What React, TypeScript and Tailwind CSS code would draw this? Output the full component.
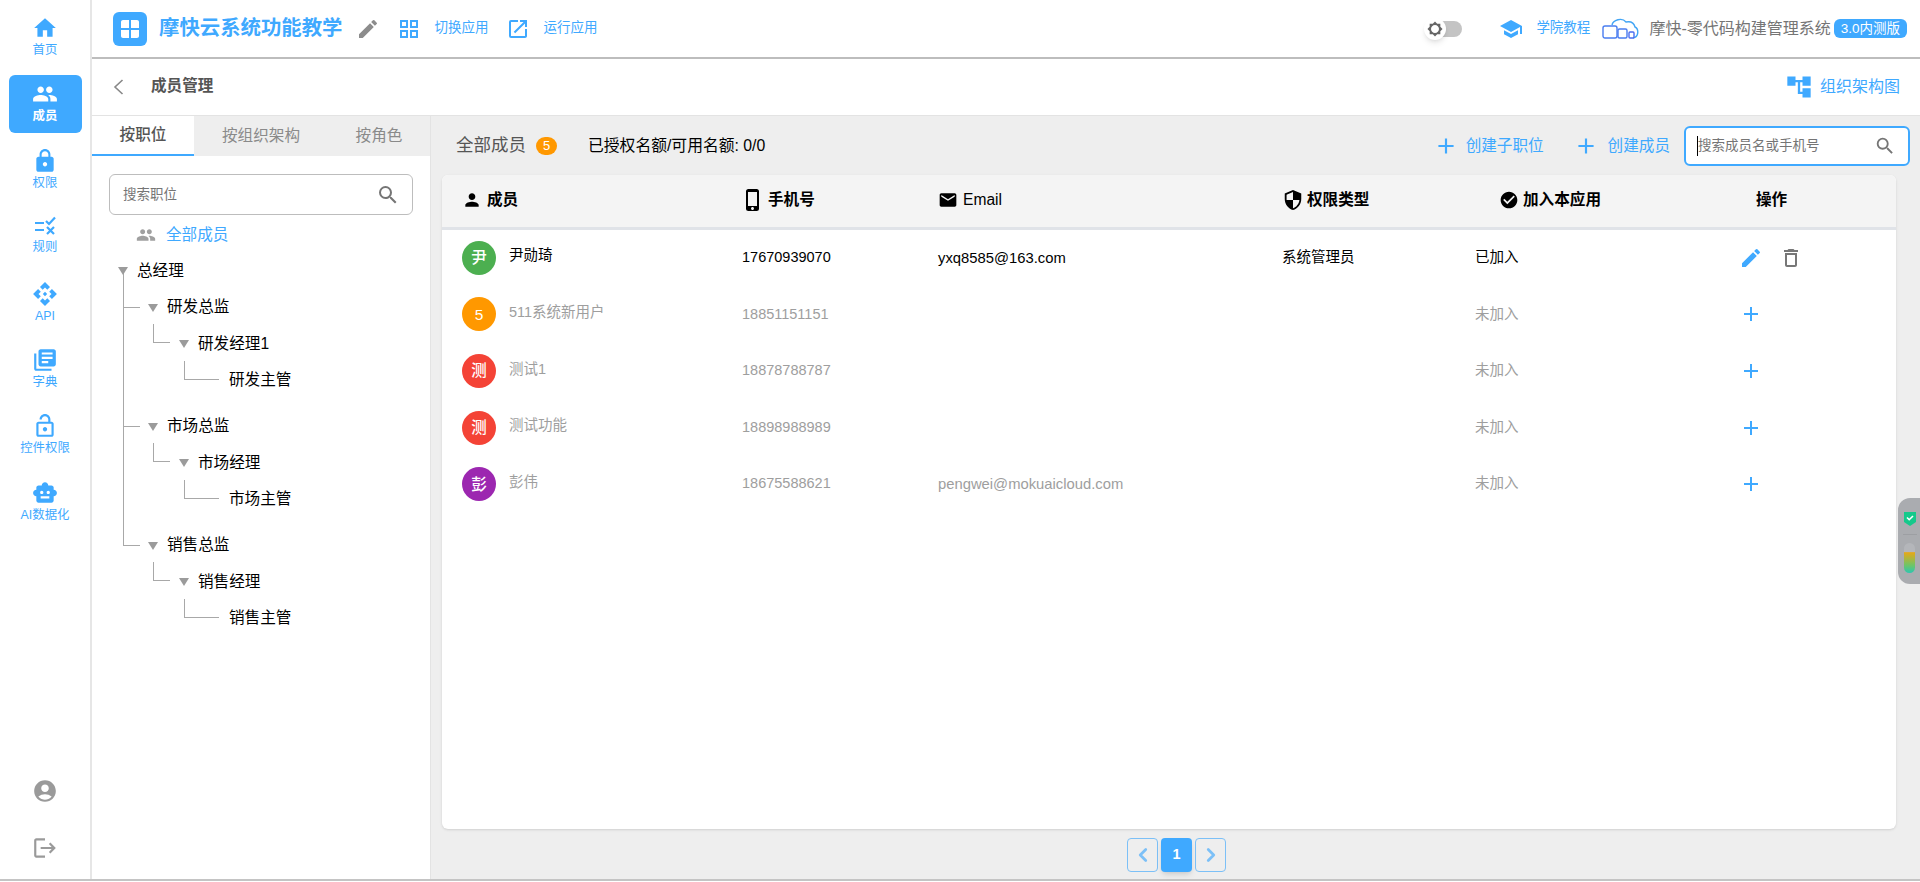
import { ReactNode } from 'react';
import { ChevronLeft, ChevronRight } from 'lucide-react';
import {
  MdHome, MdPeople, MdLock, MdApi, MdLibraryBooks, MdOutlineLockOpen, MdSmartToy,
  MdAccountCircle, MdLogout, MdEdit, MdOutlineDelete, MdAdd, MdSearch, MdSchool, MdPerson,
  MdPhoneIphone, MdEmail, MdSecurity, MdCheckCircle, MdOutlineOpenInNew, MdOutlineGridView,
  MdAccountTree, MdWindow, MdBrightness5,
} from 'react-icons/md';

function RuleIcon() {
  return (
    <svg width="24" height="24" viewBox="0 0 24 24" fill="none" stroke="currentColor" strokeWidth="2.2">
      <path d="M2 9h9M2 16h9" />
      <path d="M13 7l3 3 6-6.5" />
      <path d="M14 13l7 7M21 13l-7 7" />
    </svg>
  );
}

function CloudLogo() {
  return (
    <svg width="38" height="24" viewBox="0 0 38 24" fill="none" strokeWidth="1.4">
      <path d="M10 8c1-5 10-8 14-3 5-1 8 1 9 5 4 2 4 10-2 11" stroke="#42a5f5" />
      <rect x="1" y="9" width="14" height="12" rx="2" stroke="#4a7df0" />
      <rect x="16" y="12" width="9" height="9" rx="1.5" stroke="#4a7df0" />
      <rect x="27" y="15" width="5" height="6" rx="1" stroke="#4a6df0" />
    </svg>
  );
}

function Caret() {
  return (
    <svg width="10" height="8" viewBox="0 0 10 8" className="shrink-0 mt-[2px]">
      <path d="M0 0h10L5 8z" fill="#9b9b9b" />
    </svg>
  );
}

const navItems: { label: string; icon: ReactNode; active?: boolean }[] = [
  { label: '首页', icon: <MdHome size={26} /> },
  { label: '成员', icon: <MdPeople size={26} />, active: true },
  { label: '权限', icon: <MdLock size={26} /> },
  { label: '规则', icon: <RuleIcon /> },
  { label: 'API', icon: <MdApi size={26} /> },
  { label: '字典', icon: <MdLibraryBooks size={26} /> },
  { label: '控件权限', icon: <MdOutlineLockOpen size={26} /> },
  { label: 'AI数据化', icon: <MdSmartToy size={26} /> },
];

function Sidebar() {
  return (
    <aside className="w-[92px] shrink-0 flex flex-col items-center border-r-2 border-[#e6e6e6] bg-white pt-[9px] pb-[18px]">
      <div className="flex flex-col gap-[8.4px]">
        {navItems.map((item) => (
          <div
            key={item.label}
            className={
              item.active
                ? 'w-[73px] h-[58px] rounded-md bg-[#3fa9ff] text-white font-bold flex flex-col items-center pt-[6px]'
                : 'w-[73px] h-[58px] rounded-md text-[#3fa9ff] flex flex-col items-center pt-[6px]'
            }
          >
            {item.icon}
            <span className="text-[12.4px] leading-[18px] whitespace-nowrap">{item.label}</span>
          </div>
        ))}
      </div>
      <div className="mt-auto flex flex-col items-center gap-[31px] text-[#9a9a9a]">
        <MdAccountCircle size={26} />
        <MdLogout size={26} />
      </div>
    </aside>
  );
}

function TopBar() {
  return (
    <header className="h-[59px] shrink-0 flex items-center border-b-2 border-[#bdbdbd] bg-white pl-[21px] pr-[13px]">
      <div className="w-[34px] h-[34px] rounded-md bg-[#3fa9ff] text-white flex items-center justify-center">
        <MdWindow size={24} />
      </div>
      <span className="ml-[12px] text-[20.4px] font-bold text-[#3fa9ff]">摩快云系统功能教学</span>
      <MdEdit size={24} className="ml-[13px] text-[#8c8c8c]" />
      <MdOutlineGridView size={24} className="ml-[17px] text-[#3fa9ff]" />
      <span className="ml-[14px] text-[13.5px] text-[#3fa9ff]">切换应用</span>
      <MdOutlineOpenInNew size={24} className="ml-[17px] text-[#3fa9ff]" />
      <span className="ml-[14px] text-[13.5px] text-[#3fa9ff]">运行应用</span>

      <div className="ml-auto flex items-center">
        <div className="relative w-[38px] h-[16px] mr-[37px]">
          <div className="absolute right-0 top-0 w-[28px] h-[16px] rounded-full bg-[#c4c4c4]" />
          <div className="absolute left-0 top-[-3px] w-[22px] h-[22px] rounded-full bg-white shadow-md flex items-center justify-center text-[#666]">
            <MdBrightness5 size={16} />
          </div>
        </div>
        <MdSchool size={24} className="text-[#3fa9ff]" />
        <span className="ml-[13px] text-[13.5px] text-[#3fa9ff]">学院教程</span>
        <span className="ml-[12px]"><CloudLogo /></span>
        <span className="ml-[9px] text-[16px] text-[#757575]">摩快-零代码构建管理系统</span>
        <span className="ml-[3px] h-[19px] px-[7px] rounded-md bg-[#3fa9ff] text-white text-[13.5px] leading-[19px]">3.0内测版</span>
      </div>
    </header>
  );
}

type TreeNode = { label: string; level: number; caret: boolean; groupStart?: boolean };

const tree: TreeNode[] = [
  { label: '总经理', level: 0, caret: true },
  { label: '研发总监', level: 1, caret: true },
  { label: '研发经理1', level: 2, caret: true },
  { label: '研发主管', level: 3, caret: false },
  { label: '市场总监', level: 1, caret: true, groupStart: true },
  { label: '市场经理', level: 2, caret: true },
  { label: '市场主管', level: 3, caret: false },
  { label: '销售总监', level: 1, caret: true, groupStart: true },
  { label: '销售经理', level: 2, caret: true },
  { label: '销售主管', level: 3, caret: false },
];

const levelPad = ['pl-[26px]', 'pl-[56px]', 'pl-[87px]', 'pl-[137px]'];

function TreeRow({ node }: { node: TreeNode }) {
  return (
    <div className={node.groupStart ? 'mt-[9.5px]' : ''}>
      <div className={`relative h-[36.5px] flex items-center text-[15.6px] text-black ${levelPad[node.level]}`}>
        {node.level === 1 && <div className="absolute left-[31px] top-1/2 w-[17px] border-t border-[#a8a8a8]" />}
        {node.level === 2 && (
          <div className="absolute left-[61px] bottom-1/2 w-[17px] h-[19px] border-l border-b border-[#a8a8a8]" />
        )}
        {node.level === 3 && (
          <div className="absolute left-[92px] bottom-1/2 w-[35px] h-[19px] border-l border-b border-[#a8a8a8]" />
        )}
        {node.caret && <Caret />}
        <span className={node.caret ? 'ml-[9px]' : ''}>{node.label}</span>
      </div>
    </div>
  );
}

function LeftPanel() {
  return (
    <section className="w-[339px] shrink-0 flex flex-col border-r border-[#e3e3e3] bg-white">
      <div className="h-[40px] shrink-0 flex bg-[#eeeeee] text-[15.6px] text-[#8a8a8a]">
        <div className="w-[102px] flex items-center justify-center bg-white border-b-2 border-[#3fa9ff] font-medium text-[#555]">按职位</div>
        <div className="w-[134px] flex items-center justify-center">按组织架构</div>
        <div className="flex-1 flex items-center justify-center">按角色</div>
      </div>
      <div className="ml-[17px] mr-[17px] mt-[18px] h-[41px] shrink-0 flex items-center border border-[#bdbdbd] rounded-md pl-[13px] pr-[12px] text-[13.5px] text-[#757575]">
        <span className="mt-[1px]">搜索职位</span>
        <MdSearch size={24} className="ml-auto" />
      </div>
      <div className="mt-[9px] ml-[44px] flex items-center h-[22px]">
        <MdPeople size={20} className="text-[#a0a0a0]" />
        <span className="ml-[10px] text-[15.6px] text-[#3fa9ff]">全部成员</span>
      </div>
      <div className="relative mt-[6px]">
        <div className="absolute left-[31px] top-[17px] h-[277px] border-l border-[#a8a8a8]" />
        {tree.map((node) => (
          <TreeRow key={node.label} node={node} />
        ))}
      </div>
    </section>
  );
}

type Member = { avatar: string; color: string; name: string; phone: string; email: string; role: string; joined: boolean };

const members: Member[] = [
  { avatar: '尹', color: 'bg-[#4caf50]', name: '尹勋琦', phone: '17670939070', email: 'yxq8585@163.com', role: '系统管理员', joined: true },
  { avatar: '5', color: 'bg-[#ff9800]', name: '511系统新用户', phone: '18851151151', email: '', role: '', joined: false },
  { avatar: '测', color: 'bg-[#f44336]', name: '测试1', phone: '18878788787', email: '', role: '', joined: false },
  { avatar: '测', color: 'bg-[#f44336]', name: '测试功能', phone: '18898988989', email: '', role: '', joined: false },
  { avatar: '彭', color: 'bg-[#9c27b0]', name: '彭伟', phone: '18675588621', email: 'pengwei@mokuaicloud.com', role: '', joined: false },
];

const gridCols = 'grid grid-cols-[300px_195px_345px_192px_264px_1fr]';

function MemberTable() {
  return (
    <div className="ml-[11px] mr-[24px] h-[654px] shrink-0 bg-white rounded-md overflow-hidden shadow-sm">
      <div className={`${gridCols} h-[54.5px] pb-[2px] items-center bg-[#f4f4f4] border-b-[3px] border-[#e0e3e8] text-[15.6px] font-semibold text-black`}>
        <div className="pl-[20px] flex items-center gap-[5px]"><MdPerson size={20} />成员</div>
        <div className="flex items-center gap-[3px]"><MdPhoneIphone size={24} className="-ml-[1px]" />手机号</div>
        <div className="pl-[1px] flex items-center gap-[5px] font-normal"><MdEmail size={20} />Email</div>
        <div className="flex items-center gap-[3px]"><MdSecurity size={22} />权限类型</div>
        <div className="pl-[25px] flex items-center gap-[4px]"><MdCheckCircle size={20} />加入本应用</div>
        <div className="pl-[18px]">操作</div>
      </div>
      {members.map((m) => (
        <div
          key={m.phone}
          className={`${gridCols} h-[56.6px] items-center text-[14.5px] ${m.joined ? 'text-black' : 'text-[#9e9e9e]'}`}
        >
          <div className="pl-[20px] flex items-center">
            <div className={`w-[34px] h-[34px] rounded-full ${m.color} text-white text-[15.5px] font-medium flex items-center justify-center`}>{m.avatar}</div>
            <span className="ml-[13px] -mt-[3px]">{m.name}</span>
          </div>
          <div>{m.phone}</div>
          <div className="pl-[1px] text-[14.8px]">{m.email}</div>
          <div>{m.role}</div>
          <div className="pl-[1px]">{m.joined ? '已加入' : '未加入'}</div>
          <div className="flex items-center pl-[1px]">
            {m.joined ? (
              <>
                <MdEdit size={24} className="text-[#3fa9ff]" />
                <MdOutlineDelete size={24} className="ml-[16px] text-[#777]" />
              </>
            ) : (
              <MdAdd size={24} className="text-[#3fa9ff]" />
            )}
          </div>
        </div>
      ))}
    </div>
  );
}

function Pager() {
  return (
    <div className="flex-1 flex items-start justify-center gap-[3px] pt-[9px] pl-[2px]">
      <div className="w-[31px] h-[34px] rounded border border-[#7cc0f7] text-[#7cc0f7] flex items-center justify-center"><ChevronLeft size={22} strokeWidth={3} /></div>
      <div className="w-[31px] h-[34px] rounded bg-[#3fa9ff] text-white text-[14.5px] font-bold shadow-md flex items-center justify-center">1</div>
      <div className="w-[31px] h-[34px] rounded border border-[#7cc0f7] text-[#7cc0f7] flex items-center justify-center"><ChevronRight size={22} strokeWidth={3} /></div>
    </div>
  );
}

function RightPanel() {
  return (
    <section className="flex-1 min-w-0 flex flex-col bg-[#eeeeee]">
      <div className="h-[59px] shrink-0 flex items-center pl-[25px] pr-[10px]">
        <span className="text-[17.5px] text-[#555]">全部成员</span>
        <span className="ml-[10px] w-[21px] h-[18px] rounded-full bg-[#ff9800] text-white text-[13px] flex items-center justify-center">5</span>
        <span className="ml-[31px] text-[15.8px] text-black">已授权名额/可用名额: 0/0</span>
        <div className="ml-auto flex items-center text-[15.6px] text-[#3fa9ff]">
          <MdAdd size={26} />
          <span className="ml-[7px]">创建子职位</span>
          <MdAdd size={26} className="ml-[29px]" />
          <span className="ml-[9px]">创建成员</span>
        </div>
        <div className="ml-[14px] w-[226px] h-[40px] flex items-center border-2 border-[#3fa9ff] rounded-md bg-white pl-[11px] pr-[12px] text-[13.5px] text-[#757575]">
          <span className="border-l border-black leading-[20px]">搜索成员名或手机号</span>
          <MdSearch size={22} className="ml-auto" />
        </div>
      </div>
      <MemberTable />
      <Pager />
    </section>
  );
}

export default function App() {
  return (
    <div className="relative h-[882px] w-[1920px] overflow-hidden bg-white [font-family:'Liberation_Sans','Noto_Sans_CJK_SC',sans-serif]">
      <div className="h-[881px] flex border-b-2 border-[#c4c4c4]">
        <Sidebar />
        <main className="flex-1 min-w-0 flex flex-col">
          <TopBar />
          <div className="h-[57px] shrink-0 flex items-center border-b border-[#e3e3e3] pl-[21px] pr-[20px]">
            <svg width="11" height="16" viewBox="0 0 11 16" fill="none" stroke="#888" strokeWidth="1.6">
              <path d="M9.5 1L2 8l7.5 7" />
            </svg>
            <span className="ml-[27px] -mt-[2px] text-[15.6px] font-bold text-[#555]">成员管理</span>
            <div className="ml-auto flex items-center text-[#3fa9ff] text-[16px]">
              <MdAccountTree size={28} />
              <span className="ml-[7px]">组织架构图</span>
            </div>
          </div>
          <div className="flex-1 min-h-0 flex">
            <LeftPanel />
            <RightPanel />
          </div>
        </main>
      </div>
      {/* floating widget on the right edge */}
      <div className="absolute right-0 top-[498px] w-[22px] h-[86px] rounded-l-xl bg-[#aaacb0] flex flex-col items-center pt-[14px] pl-[1px]">
        <svg width="12" height="14" viewBox="0 0 12 14">
          <path d="M0 0h12v10l-6 4-6-4z" fill="#14c98b" />
          <path d="M3 5.5l2.2 2.2L9 4" stroke="#fff" strokeWidth="1.6" fill="none" />
        </svg>
        <div className="mt-[8px] w-[14px] border-t border-[#9d9fa3]" />
        <div className="mt-[8px] w-[11px] h-[30px] rounded-full bg-[linear-gradient(#b4b6ba_0_30%,#e6a817_32%,#6cc56a_75%,#2cc6b0)]" />
      </div>
    </div>
  );
}
